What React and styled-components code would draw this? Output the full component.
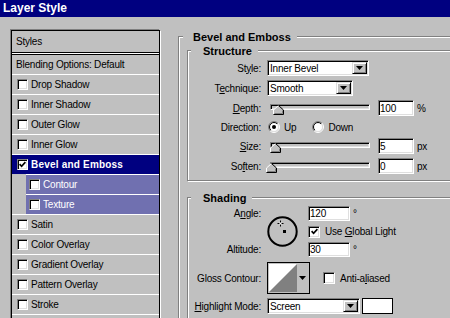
import React, { useId } from 'react';
import styled, { createGlobalStyle } from 'styled-components';

const GlobalStyle = createGlobalStyle`
  *, *::before, *::after { box-sizing: border-box; }
  html, body { margin: 0; padding: 0; background: #c0c0c0; }
  body {
    font-family: "Liberation Sans", Arial, sans-serif;
    font-size: 10px;
    letter-spacing: -0.2px;
    color: #000;
  }
  u { text-decoration: underline; text-underline-offset: 1px; }
`;

const Window = styled.div`
  width: 450px;
  height: 318px;
  overflow: hidden;
  display: flex;
  flex-direction: column;
  background: #c0c0c0;
`;

const TitleBar = styled.div`
  flex: none;
  height: 17px;
  background: #000080;
  color: #fff;
  font-size: 12px;
  font-weight: bold;
  letter-spacing: 0;
  line-height: 16px;
  padding-left: 3px;
`;

const Body = styled.div`
  flex: 1;
  min-height: 0;
  display: flex;
  align-items: flex-start;
  gap: 18px;
  padding: 12px 0 0 11px;
`;

/* ---------- left list ---------- */

const StyleList = styled.div`
  flex: none;
  width: 149px;
  height: 300px;
  margin-top: 1px;
  border: 1px solid #000;
  box-shadow: -1px -1px 0 #808080, 1px 1px 0 #fff;
  display: flex;
  flex-direction: column;
`;

const ListHeader = styled.div`
  flex: none;
  height: ${p => p.$h}px;
  display: flex;
  align-items: center;
  padding-left: 4px;
`;

const ListDivider = styled.div`
  flex: none;
  height: 3px;
  border-top: 1px solid #000;
  border-bottom: 1px solid #000;
  background: #fff;
`;

const EffectRow = styled.div`
  flex: none;
  height: 20px;
  border-top: 1px solid #fff;
  display: flex;
  align-items: center;
  gap: 3px;
  padding-left: ${p => (p.$sub ? 3 : 5)}px;
  margin-left: ${p => (p.$sub ? 14 : 0)}px;
  background: ${p => (p.$selected ? '#000080' : p.$sub ? '#7070b0' : 'transparent')};
  color: ${p => (p.$selected || p.$sub ? '#fff' : '#000')};
  font-weight: ${p => (p.$selected ? 'bold' : 'normal')};
  letter-spacing: ${p => (p.$selected ? '0.2px' : '-0.2px')};
`;

/* ---------- common controls ---------- */

const CheckBox = styled.span`
  flex: none;
  width: ${p => p.$s}px;
  height: ${p => p.$s}px;
  background: #fff;
  display: inline-flex;
  align-items: center;
  justify-content: center;
  border: 1px solid;
  border-color: #808080 #fff #fff #808080;
  box-shadow: inset 1px 1px 0 #000, inset -1px -1px 0 #dfdfdf;
`;

function Check({ size = 11, checked }) {
  return (
    <CheckBox $s={size}>
      {checked && (
        <svg width="7" height="7" viewBox="0 0 7 7">
          <path d="M0.6 3.2 L2.6 5.3 L6.4 1.2" stroke="#000" strokeWidth="1.7" fill="none" />
        </svg>
      )}
    </CheckBox>
  );
}

const RadioSvg = styled.svg`
  flex: none;
  display: block;
`;

function Radio({ checked }) {
  const id = useId().replace(/[^a-zA-Z0-9]/g, '');
  return (
    <RadioSvg width="12" height="12" viewBox="0 0 12 12">
      <defs>
        <linearGradient id={`ro${id}`} x1="0" y1="0" x2="1" y2="1">
          <stop offset="0.5" stopColor="#808080" />
          <stop offset="0.5" stopColor="#ffffff" />
        </linearGradient>
        <linearGradient id={`ri${id}`} x1="0" y1="0" x2="1" y2="1">
          <stop offset="0.5" stopColor="#000000" />
          <stop offset="0.5" stopColor="#dfdfdf" />
        </linearGradient>
      </defs>
      <circle cx="6" cy="6" r="5.5" fill="none" stroke={`url(#ro${id})`} />
      <circle cx="6" cy="6" r="4.5" fill="#fff" stroke={`url(#ri${id})`} />
      {checked && <circle cx="6" cy="6" r="2" fill="#000" />}
    </RadioSvg>
  );
}

const SelectBox = styled.div`
  flex: none;
  width: ${p => p.$w}px;
  height: 16px;
  display: flex;
  align-items: center;
  justify-content: space-between;
  background: #fff;
  border: 1px solid;
  border-color: #808080 #fff #fff #808080;
  box-shadow: inset 1px 1px 0 #000, inset -1px -1px 0 #dfdfdf;
  padding: 0 1px 0 2px;
  white-space: nowrap;
`;

const SelectButton = styled.span`
  flex: none;
  width: 15px;
  height: 12px;
  background: #c0c0c0;
  display: flex;
  align-items: center;
  justify-content: center;
  border: 1px solid;
  border-color: #dfdfdf #000 #000 #dfdfdf;
  box-shadow: inset 1px 1px 0 #fff, inset -1px -1px 0 #808080;
`;

function Arrow() {
  return (
    <svg width="7" height="4" viewBox="0 0 7 4">
      <polygon points="0,0 7,0 3.5,4" fill="#000" />
    </svg>
  );
}

function Select({ w, value }) {
  return (
    <SelectBox $w={w}>
      <span>{value}</span>
      <SelectButton>
        <Arrow />
      </SelectButton>
    </SelectBox>
  );
}

const Field = styled.div`
  flex: none;
  width: ${p => p.$w}px;
  height: ${p => p.$h}px;
  background: #fff;
  border: 1px solid;
  border-color: #808080 #fff #fff #808080;
  box-shadow: inset 1px 1px 0 #000, inset -1px -1px 0 #dfdfdf;
  padding-left: 1px;
  display: flex;
  align-items: center;
`;

const Unit = styled.span`
  margin-left: ${p => p.$ml ?? 3}px;
`;

const Slider = styled.div`
  flex: none;
  position: relative;
  width: 103px;
  height: 16px;
  margin-right: 8px;
`;

const Track = styled.div`
  margin: 4px 0 0 3px;
  height: 6px;
  background: #c0c0c0;
  border: 1px solid;
  border-color: #808080 #fff #fff #808080;
  box-shadow: inset 1px 1px 0 #000, inset -1px -1px 0 #dfdfdf;
`;

const ThumbSvg = styled.svg`
  position: absolute;
  top: 5px;
  left: ${p => p.$x}px;
`;

function SliderControl({ x }) {
  return (
    <Slider>
      <Track />
      <ThumbSvg $x={x} width="11" height="10" viewBox="0 0 11 10">
        <polygon points="5.5,0.5 10.5,5 10.5,9.5 0.5,9.5 0.5,5" fill="#c0c0c0" />
        <polyline points="0.5,9 0.5,5 5.5,0.5" stroke="#fff" fill="none" />
        <polyline points="5.5,0.5 10.5,5 10.5,9.5 0.5,9.5" stroke="#000" fill="none" />
        <polyline points="1.5,8.5 9.5,8.5 9.5,5.5" stroke="#808080" fill="none" />
      </ThumbSvg>
    </Slider>
  );
}

/* ---------- right panel ---------- */

const RightPane = styled.div`
  flex: none;
  width: 292px;
`;

const GroupBox = styled.fieldset`
  margin: ${p => p.$mt || 0}px 0 0 0;
  padding: ${p => p.$pad};
  min-width: 0;
  border: 1px solid #808080;
  box-shadow: inset 1px 1px 0 #fff, 1px 1px 0 #fff;
  ${p => (p.$h ? `height: ${p.$h}px;` : '')}
`;

const GroupTitle = styled.legend`
  font-size: 11px;
  font-weight: bold;
  letter-spacing: 0;
  line-height: 13px;
  padding: 2px 6px 0 ${p => p.$pl}px;
  margin-left: ${p => p.$ml}px;
  background: #c0c0c0;
`;

const FormRow = styled.div`
  display: grid;
  grid-template-columns: 73px auto;
  column-gap: 6px;
  align-items: center;
  height: ${p => p.$h}px;
  margin-top: ${p => p.$mt || 0}px;
`;

const Label = styled.div`
  text-align: right;
  white-space: nowrap;
`;

const Controls = styled.div`
  display: flex;
  align-items: center;
  padding-left: ${p => p.$pl || 0}px;
  white-space: nowrap;
`;

const RadioOpt = styled.span`
  display: inline-flex;
  align-items: center;
  gap: 4px;
  margin-right: ${p => p.$mr || 0}px;
`;

const AngleBlock = styled.div`
  display: grid;
  grid-template-columns: 73px auto;
  column-gap: 6px;
  height: 51px;
`;

const LabelStack = styled.div`
  display: flex;
  flex-direction: column;
  justify-content: space-between;
  text-align: right;
  line-height: 15px;
  white-space: nowrap;
`;

const AngleControls = styled.div`
  display: flex;
  gap: 10px;
`;

const Dial = styled.svg`
  flex: none;
  margin-top: 9px;
  display: block;
`;

const StackCol = styled.div`
  display: flex;
  flex-direction: column;
  gap: 3px;
`;

const InlineRow = styled.div`
  display: flex;
  align-items: center;
  height: 15px;
  gap: ${p => p.$gap || 0}px;
  white-space: nowrap;
`;

const ContourBox = styled.div`
  flex: none;
  width: 43px;
  height: 32px;
  display: flex;
  border: 1px solid #000;
  padding: 1px;
  background: #c0c0c0;
`;

const ContourStrip = styled.div`
  flex: 1;
  display: flex;
  align-items: center;
  justify-content: center;
`;

const AntiAlias = styled.span`
  display: inline-flex;
  align-items: center;
  gap: 5px;
  margin-left: 13px;
`;

const Swatch = styled.div`
  flex: none;
  width: 31px;
  height: 16px;
  margin-left: 2px;
  background: #fff;
  border: 1px solid #000;
`;

const effects = [
  { name: 'Drop Shadow' },
  { name: 'Inner Shadow' },
  { name: 'Outer Glow' },
  { name: 'Inner Glow' },
  { name: 'Bevel and Emboss', selected: true, checked: true },
  { name: 'Contour', sub: true },
  { name: 'Texture', sub: true },
  { name: 'Satin' },
  { name: 'Color Overlay' },
  { name: 'Gradient Overlay' },
  { name: 'Pattern Overlay' },
  { name: 'Stroke' },
];

export default function App() {
  return (
    <Window>
      <GlobalStyle />
      <TitleBar>Layer Style</TitleBar>
      <Body>
        <StyleList>
          <ListHeader $h={21}>Styles</ListHeader>
          <ListDivider />
          <ListHeader $h={19}>Blending Options: Default</ListHeader>
          {effects.map(e => (
            <EffectRow key={e.name} $sub={e.sub} $selected={e.selected}>
              <Check size={11} checked={e.checked} />
              <span>{e.name}</span>
            </EffectRow>
          ))}
          <EffectRow />
        </StyleList>

        <RightPane>
          <GroupBox $pad="0 0 0 8px" $h={300}>
            <GroupTitle $ml={-4} $pl={10}>Bevel and Emboss</GroupTitle>

            <GroupBox $mt={-1} $pad="0 0 4px 0">
              <GroupTitle $ml={3} $pl={12}>Structure</GroupTitle>
              <FormRow $h={20}>
                <Label>St<u>y</u>le:</Label>
                <Controls><Select w={102} value="Inner Bevel" /></Controls>
              </FormRow>
              <FormRow $h={20}>
                <Label>T<u>e</u>chnique:</Label>
                <Controls><Select w={86} value="Smooth" /></Controls>
              </FormRow>
              <FormRow $h={20}>
                <Label><u>D</u>epth:</Label>
                <Controls>
                  <SliderControl x={6} />
                  <Field $w={36} $h={16}>100</Field>
                  <Unit>%</Unit>
                </Controls>
              </FormRow>
              <FormRow $h={18}>
                <Label>Direction:</Label>
                <Controls $pl={1}>
                  <RadioOpt $mr={16}><Radio checked />Up</RadioOpt>
                  <RadioOpt><Radio />Down</RadioOpt>
                </Controls>
              </FormRow>
              <FormRow $h={20}>
                <Label><u>S</u>ize:</Label>
                <Controls>
                  <SliderControl x={3} />
                  <Field $w={36} $h={16}>5</Field>
                  <Unit>px</Unit>
                </Controls>
              </FormRow>
              <FormRow $h={20}>
                <Label>So<u>f</u>ten:</Label>
                <Controls>
                  <SliderControl x={-1} />
                  <Field $w={36} $h={16}>0</Field>
                  <Unit>px</Unit>
                </Controls>
              </FormRow>
            </GroupBox>

            <GroupBox $mt={9} $pad="1px 0 0 0" $h={140}>
              <GroupTitle $ml={3} $pl={12}>Shading</GroupTitle>
              <AngleBlock>
                <LabelStack>
                  <span>A<u>n</u>gle:</span>
                  <span>Altitude:</span>
                </LabelStack>
                <AngleControls>
                  <Dial width="31" height="33" viewBox="0 0 31 33">
                    <circle cx="15.5" cy="16.5" r="14.2" fill="none" stroke="#000" strokeWidth="2" />
                    <line x1="10.5" y1="8.5" x2="16.5" y2="8.5" stroke="#000" strokeWidth="1" />
                    <line x1="13.5" y1="5.5" x2="13.5" y2="11.5" stroke="#000" strokeWidth="1" />
                    <rect x="12.5" y="7.5" width="2" height="2" fill="#fff" />
                    <rect x="16" y="15" width="3" height="3" fill="#000" />
                  </Dial>
                  <StackCol>
                    <InlineRow>
                      <Field $w={42} $h={15}>120</Field>
                      <Unit $ml={3}>°</Unit>
                    </InlineRow>
                    <InlineRow $gap={5}>
                      <Check size={12} checked />
                      <span>Use <u>G</u>lobal Light</span>
                    </InlineRow>
                    <InlineRow>
                      <Field $w={42} $h={15}>30</Field>
                      <Unit $ml={3}>°</Unit>
                    </InlineRow>
                  </StackCol>
                </AngleControls>
              </AngleBlock>

              <FormRow $h={32} $mt={5}>
                <Label>Gloss Contour:</Label>
                <Controls>
                  <ContourBox>
                    <svg width="28" height="28" viewBox="0 0 28 28">
                      <rect width="28" height="28" fill="#fff" />
                      <polygon points="0,28 28,0 28,28" fill="#808080" />
                    </svg>
                    <ContourStrip><Arrow /></ContourStrip>
                  </ContourBox>
                  <AntiAlias>
                    <Check size={12} />
                    <span>Anti-a<u>l</u>iased</span>
                  </AntiAlias>
                </Controls>
              </FormRow>

              <FormRow $h={16} $mt={4}>
                <Label><u>H</u>ighlight Mode:</Label>
                <Controls>
                  <Select w={93} value="Screen" />
                  <Swatch />
                </Controls>
              </FormRow>
            </GroupBox>
          </GroupBox>
        </RightPane>
      </Body>
    </Window>
  );
}
